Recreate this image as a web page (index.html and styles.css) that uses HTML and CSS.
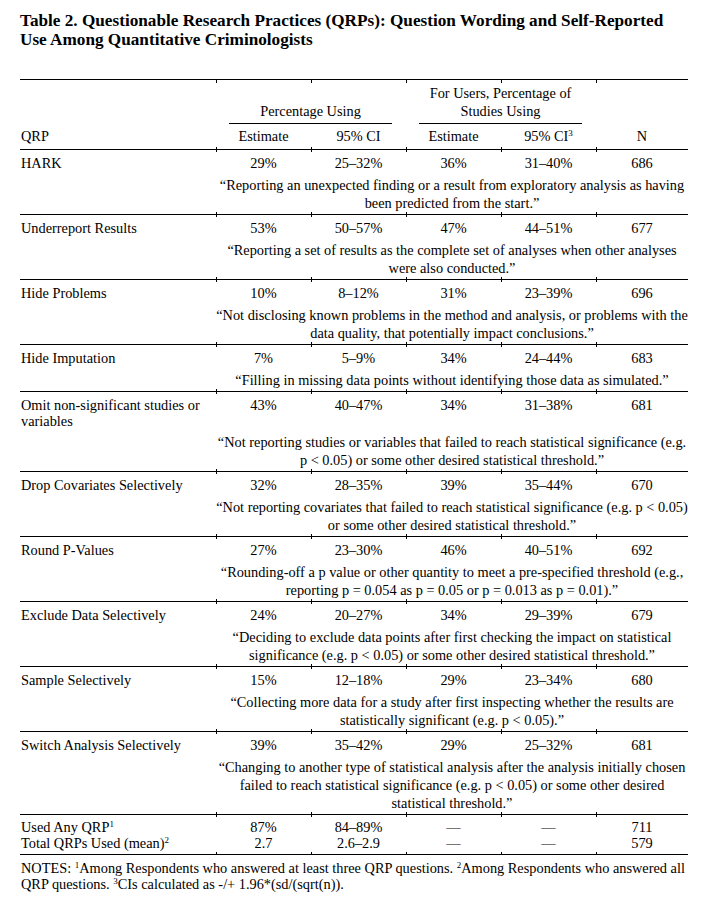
FILE: index.html
```html
<!DOCTYPE html>
<html lang="en">
<head>
<meta charset="utf-8">
<title>Table 2. Questionable Research Practices</title>
<link rel="stylesheet" href="styles.css">
</head>
<body>
<div class="page">
  <h1 class="title">Table 2. Questionable Research Practices (QRPs): Question Wording and Self-Reported<br>Use Among Quantitative Criminologists</h1>

  <table class="qrp">
    <colgroup>
      <col class="c-label"><col class="c-num"><col class="c-num"><col class="c-num"><col class="c-num"><col class="c-n">
    </colgroup>
    <thead>
      <tr class="group-row">
        <td></td>
        <th colspan="2" class="tk2"><div class="group">Percentage Using</div></th>
        <th colspan="2" class="tk2"><div class="group">For Users, Percentage of<br>Studies Using</div></th>
        <td class="tk1"></td>
      </tr>
      <tr class="head-row">
        <th class="lbl">QRP</th>
        <th>Estimate</th>
        <th>95% CI</th>
        <th>Estimate</th>
        <th>95% CI<sup>3</sup></th>
        <th>N</th>
      </tr>
    </thead>

    <tbody>
      <tr class="data"><td class="lbl">HARK</td><td>29%</td><td>25–32%</td><td>36%</td><td>31–40%</td><td>686</td></tr>
      <tr class="quote"><td></td><td colspan="5">“Reporting an unexpected finding or a result from exploratory analysis as having<br>been predicted from the start.”</td></tr>

      <tr class="data"><td class="lbl">Underreport Results</td><td>53%</td><td>50–57%</td><td>47%</td><td>44–51%</td><td>677</td></tr>
      <tr class="quote"><td></td><td colspan="5">“Reporting a set of results as the complete set of analyses when other analyses<br>were also conducted.”</td></tr>

      <tr class="data"><td class="lbl">Hide Problems</td><td>10%</td><td>8–12%</td><td>31%</td><td>23–39%</td><td>696</td></tr>
      <tr class="quote"><td></td><td colspan="5">“Not disclosing known problems in the method and analysis, or problems with the<br>data quality, that potentially impact conclusions.”</td></tr>

      <tr class="data"><td class="lbl">Hide Imputation</td><td>7%</td><td>5–9%</td><td>34%</td><td>24–44%</td><td>683</td></tr>
      <tr class="quote"><td></td><td colspan="5">“Filling in missing data points without identifying those data as simulated.”</td></tr>

      <tr class="data"><td class="lbl">Omit non-significant studies or<br>variables</td><td>43%</td><td>40–47%</td><td>34%</td><td>31–38%</td><td>681</td></tr>
      <tr class="quote"><td></td><td colspan="5">“Not reporting studies or variables that failed to reach statistical significance (e.g.<br>p &lt; 0.05) or some other desired statistical threshold.”</td></tr>

      <tr class="data"><td class="lbl">Drop Covariates Selectively</td><td>32%</td><td>28–35%</td><td>39%</td><td>35–44%</td><td>670</td></tr>
      <tr class="quote"><td></td><td colspan="5">“Not reporting covariates that failed to reach statistical significance (e.g. p &lt; 0.05)<br>or some other desired statistical threshold.”</td></tr>

      <tr class="data"><td class="lbl">Round P-Values</td><td>27%</td><td>23–30%</td><td>46%</td><td>40–51%</td><td>692</td></tr>
      <tr class="quote"><td></td><td colspan="5">“Rounding-off a p value or other quantity to meet a pre-specified threshold (e.g.,<br>reporting p = 0.054 as p = 0.05 or p = 0.013 as p = 0.01).”</td></tr>

      <tr class="data"><td class="lbl">Exclude Data Selectively</td><td>24%</td><td>20–27%</td><td>34%</td><td>29–39%</td><td>679</td></tr>
      <tr class="quote"><td></td><td colspan="5">“Deciding to exclude data points after first checking the impact on statistical<br>significance (e.g. p &lt; 0.05) or some other desired statistical threshold.”</td></tr>

      <tr class="data"><td class="lbl">Sample Selectively</td><td>15%</td><td>12–18%</td><td>29%</td><td>23–34%</td><td>680</td></tr>
      <tr class="quote"><td></td><td colspan="5">“Collecting more data for a study after first inspecting whether the results are<br>statistically significant (e.g. p &lt; 0.05).”</td></tr>

      <tr class="data"><td class="lbl">Switch Analysis Selectively</td><td>39%</td><td>35–42%</td><td>29%</td><td>25–32%</td><td>681</td></tr>
      <tr class="quote"><td></td><td colspan="5">“Changing to another type of statistical analysis after the analysis initially chosen<br>failed to reach statistical significance (e.g. p &lt; 0.05) or some other desired<br>statistical threshold.”</td></tr>

      <tr class="sum first"><td class="lbl">Used Any QRP<sup>1</sup></td><td>87%</td><td>84–89%</td><td>—</td><td>—</td><td>711</td></tr>
      <tr class="sum last"><td class="lbl">Total QRPs Used (mean)<sup>2</sup></td><td>2.7</td><td>2.6–2.9</td><td>—</td><td>—</td><td>579</td></tr>
    </tbody>
  </table>

  <p class="notes">NOTES: <sup>1</sup>Among Respondents who answered at least three QRP questions. <sup>2</sup>Among Respondents who answered all<br>QRP questions. <sup>3</sup>CIs calculated as -/+ 1.96*(sd/(sqrt(n)).</p>
</div>
</body>
</html>
```

FILE: styles.css
```css
html, body {
  margin: 0;
  padding: 0;
  background: #ffffff;
}

body {
  font-family: "Liberation Serif", "Times New Roman", serif;
  color: #000000;
  font-size: 14.33px;
}

.page {
  padding: 12px 0 0 20px;
}

.title {
  margin: 0;
  font-size: 17.2px;
  line-height: 18.5px;
  font-weight: bold;
  white-space: nowrap;
}

.qrp {
  margin-top: 30px;
  width: 668px;
  table-layout: fixed;
  border-collapse: separate;
  border-spacing: 0;
  font-size: 14.33px;
  line-height: 18px;
}

.c-label { width: 196px; }
.c-num { width: 95px; }
.c-n { width: 92px; }

th, td {
  padding: 0;
  font-weight: normal;
  text-align: center;
  vertical-align: top;
  white-space: nowrap;
}

.lbl {
  text-align: left;
  padding-left: 1px;
}

/* header */
.group-row > * {
  border-top: 1px solid #000;
  padding-top: 4px;
  vertical-align: bottom;
}

.group {
  margin: 0 14px 0 13px;
  padding-bottom: 3px;
  border-bottom: 1px solid #000;
}

.head-row > * {
  padding-top: 3px;
  padding-bottom: 4px;
  border-bottom: 1px solid #000;
}

/* column tick marks at rules */
.tk1 {
  background: linear-gradient(#000, #000) 0 0 / 1px 3px no-repeat;
}

.tk2 {
  background:
    linear-gradient(#000, #000) 0 0 / 1px 3px no-repeat,
    linear-gradient(#000, #000) 95px 0 / 1px 3px no-repeat;
}

.head-row > *:not(:first-child) {
  background: linear-gradient(#000, #000) 0 100% / 1px 2px no-repeat;
}

.data > *:not(:first-child),
.sum.first > *:not(:first-child) {
  background: linear-gradient(#000, #000) 0 0 / 1px 2px no-repeat;
}

.sum.last > *:not(:first-child) {
  background: linear-gradient(#000, #000) 0 100% / 1px 2px no-repeat;
}

.quote > td:last-child {
  background:
    linear-gradient(#000, #000) 0 100% / 1px 2px no-repeat,
    linear-gradient(#000, #000) 95px 100% / 1px 2px no-repeat,
    linear-gradient(#000, #000) 190px 100% / 1px 2px no-repeat,
    linear-gradient(#000, #000) 285px 100% / 1px 2px no-repeat,
    linear-gradient(#000, #000) 380px 100% / 1px 2px no-repeat;
}

/* body rows */
.data > * {
  padding-top: 4px;
}

.data > .lbl {
  line-height: 16px;
  padding-top: 5px;
}

.quote > td {
  padding-top: 4px;
  padding-bottom: 2px;
  border-bottom: 1px solid #000;
}

.sum > * {
  line-height: 16px;
}

.sum.first > * {
  padding-top: 4px;
}

.sum.last > * {
  padding-bottom: 3px;
  border-bottom: 1px solid #000;
}

sup {
  font-size: 9px;
  line-height: 0;
  vertical-align: 5px;
}

.notes {
  margin: 5px 0 0 1px;
  font-size: 14.33px;
  line-height: 16px;
  white-space: nowrap;
}
```
